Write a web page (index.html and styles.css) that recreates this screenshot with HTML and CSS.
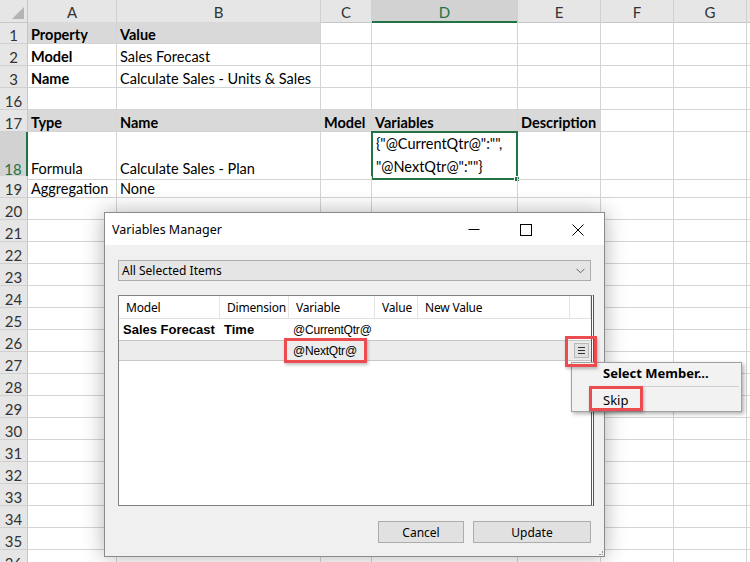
FILE: index.html
```html
<!DOCTYPE html>
<html>
<head>
<meta charset="utf-8">
<link rel="stylesheet" href="styles.css">
</head>
<body>
<div class="screen">
  <div class="sheet">
    <div class="row hdr-row">
      <div class="corner"><span class="tri"></span></div>
      <div class="colh">A</div><div class="colh">B</div><div class="colh">C</div>
      <div class="colh sel">D</div><div class="colh">E</div><div class="colh">F</div><div class="colh">G</div><div class="colh"></div>
    </div>
    <div class="row">
      <div class="rowh">1</div>
      <div class="cell fill b">Property</div><div class="cell fill b">Value</div><div class="cell"></div>
      <div class="cell"></div><div class="cell"></div><div class="cell"></div><div class="cell"></div><div class="cell"></div>
    </div>
    <div class="row">
      <div class="rowh">2</div>
      <div class="cell b">Model</div><div class="cell">Sales Forecast</div><div class="cell"></div>
      <div class="cell"></div><div class="cell"></div><div class="cell"></div><div class="cell"></div><div class="cell"></div>
    </div>
    <div class="row">
      <div class="rowh">3</div>
      <div class="cell b">Name</div><div class="cell">Calculate Sales - Units &amp; Sales</div><div class="cell"></div>
      <div class="cell"></div><div class="cell"></div><div class="cell"></div><div class="cell"></div><div class="cell"></div>
    </div>
    <div class="row">
      <div class="rowh">16</div>
      <div class="cell"></div><div class="cell"></div><div class="cell"></div>
      <div class="cell"></div><div class="cell"></div><div class="cell"></div><div class="cell"></div><div class="cell"></div>
    </div>
    <div class="row">
      <div class="rowh">17</div>
      <div class="cell fill b">Type</div><div class="cell fill b">Name</div><div class="cell fill b">Model</div>
      <div class="cell fill b">Variables</div><div class="cell fill b">Description</div><div class="cell"></div><div class="cell"></div><div class="cell"></div>
    </div>
    <div class="row tall">
      <div class="rowh sel">18</div>
      <div class="cell">Formula</div><div class="cell">Calculate Sales - Plan</div><div class="cell"></div>
      <div class="cell active"><div class="wrap">{"@CurrentQtr@":"",<br>"@NextQtr@":""}</div><span class="handle"></span></div>
      <div class="cell"></div><div class="cell"></div><div class="cell"></div><div class="cell"></div>
    </div>
    <div class="row">
      <div class="rowh">19</div>
      <div class="cell">Aggregation</div><div class="cell">None</div><div class="cell"></div>
      <div class="cell"></div><div class="cell"></div><div class="cell"></div><div class="cell"></div><div class="cell"></div>
    </div>
    <div class="row"><div class="rowh">20</div><div class="cell"></div><div class="cell"></div><div class="cell"></div><div class="cell"></div><div class="cell"></div><div class="cell"></div><div class="cell"></div><div class="cell"></div></div>
    <div class="row"><div class="rowh">21</div><div class="cell"></div><div class="cell"></div><div class="cell"></div><div class="cell"></div><div class="cell"></div><div class="cell"></div><div class="cell"></div><div class="cell"></div></div>
    <div class="row"><div class="rowh">22</div><div class="cell"></div><div class="cell"></div><div class="cell"></div><div class="cell"></div><div class="cell"></div><div class="cell"></div><div class="cell"></div><div class="cell"></div></div>
    <div class="row"><div class="rowh">23</div><div class="cell"></div><div class="cell"></div><div class="cell"></div><div class="cell"></div><div class="cell"></div><div class="cell"></div><div class="cell"></div><div class="cell"></div></div>
    <div class="row"><div class="rowh">24</div><div class="cell"></div><div class="cell"></div><div class="cell"></div><div class="cell"></div><div class="cell"></div><div class="cell"></div><div class="cell"></div><div class="cell"></div></div>
    <div class="row"><div class="rowh">25</div><div class="cell"></div><div class="cell"></div><div class="cell"></div><div class="cell"></div><div class="cell"></div><div class="cell"></div><div class="cell"></div><div class="cell"></div></div>
    <div class="row"><div class="rowh">26</div><div class="cell"></div><div class="cell"></div><div class="cell"></div><div class="cell"></div><div class="cell"></div><div class="cell"></div><div class="cell"></div><div class="cell"></div></div>
    <div class="row"><div class="rowh">27</div><div class="cell"></div><div class="cell"></div><div class="cell"></div><div class="cell"></div><div class="cell"></div><div class="cell"></div><div class="cell"></div><div class="cell"></div></div>
    <div class="row"><div class="rowh">28</div><div class="cell"></div><div class="cell"></div><div class="cell"></div><div class="cell"></div><div class="cell"></div><div class="cell"></div><div class="cell"></div><div class="cell"></div></div>
    <div class="row"><div class="rowh">29</div><div class="cell"></div><div class="cell"></div><div class="cell"></div><div class="cell"></div><div class="cell"></div><div class="cell"></div><div class="cell"></div><div class="cell"></div></div>
    <div class="row"><div class="rowh">30</div><div class="cell"></div><div class="cell"></div><div class="cell"></div><div class="cell"></div><div class="cell"></div><div class="cell"></div><div class="cell"></div><div class="cell"></div></div>
    <div class="row"><div class="rowh">31</div><div class="cell"></div><div class="cell"></div><div class="cell"></div><div class="cell"></div><div class="cell"></div><div class="cell"></div><div class="cell"></div><div class="cell"></div></div>
    <div class="row"><div class="rowh">32</div><div class="cell"></div><div class="cell"></div><div class="cell"></div><div class="cell"></div><div class="cell"></div><div class="cell"></div><div class="cell"></div><div class="cell"></div></div>
    <div class="row"><div class="rowh">33</div><div class="cell"></div><div class="cell"></div><div class="cell"></div><div class="cell"></div><div class="cell"></div><div class="cell"></div><div class="cell"></div><div class="cell"></div></div>
    <div class="row"><div class="rowh">34</div><div class="cell"></div><div class="cell"></div><div class="cell"></div><div class="cell"></div><div class="cell"></div><div class="cell"></div><div class="cell"></div><div class="cell"></div></div>
    <div class="row"><div class="rowh">35</div><div class="cell"></div><div class="cell"></div><div class="cell"></div><div class="cell"></div><div class="cell"></div><div class="cell"></div><div class="cell"></div><div class="cell"></div></div>
    <div class="row"><div class="rowh">36</div><div class="cell"></div><div class="cell"></div><div class="cell"></div><div class="cell"></div><div class="cell"></div><div class="cell"></div><div class="cell"></div><div class="cell"></div></div>
  </div>

  <div class="dialog">
    <div class="titlebar">
      <span class="title">Variables Manager</span>
      <div class="winbtns">
        <svg class="wb" width="12" height="12" viewBox="0 0 12 12"><path d="M0.5 5.5H11.5" stroke="#000" stroke-width="1"/></svg>
        <svg class="wb" width="12" height="12" viewBox="0 0 12 12"><rect x="0.5" y="0.5" width="11" height="11" fill="none" stroke="#000" stroke-width="1"/></svg>
        <svg class="wb" width="12" height="12" viewBox="0 0 12 12"><path d="M0.5 0.5L11.5 11.5M11.5 0.5L0.5 11.5" stroke="#000" stroke-width="1"/></svg>
      </div>
    </div>
    <div class="dbody">
      <div class="combo">
        <span>All Selected Items</span>
        <svg width="9" height="6" viewBox="0 0 9 6"><path d="M0.5 0.8L4.5 4.8L8.5 0.8" fill="none" stroke="#606060" stroke-width="1"/></svg>
      </div>
      <div class="list">
        <div class="lrow lhead">
          <div class="lc">Model</div><div class="lc">Dimension</div><div class="lc">Variable</div><div class="lc">Value</div><div class="lc">New Value</div><div class="lc"></div>
        </div>
        <div class="lrow">
          <div class="lc b">Sales Forecast</div><div class="lc b">Time</div><div class="lc">@CurrentQtr@</div><div class="lc"></div><div class="lc"></div><div class="lc"></div>
        </div>
        <div class="lrow lsel">
          <div class="lc"></div><div class="lc"></div><div class="lc">@NextQtr@</div><div class="lc"></div><div class="lc"></div>
          <div class="lc menucell"><span class="menubtn"><i></i><i></i><i></i></span></div>
        </div>
      </div>
      <div class="footer">
        <div class="btn cancel">Cancel</div>
        <div class="btn update">Update</div>
      </div>
    </div>
    <span class="grip"></span>
  </div>

  <div class="ctxmenu">
    <div class="mi strong">Select Member...</div>
    <div class="msep"></div>
    <div class="mi">Skip</div>
  </div>

  <span class="hl hl-var"></span>
  <span class="hl hl-btn"></span>
  <span class="hl hl-skip"></span>
</div>
</body>
</html>
```

FILE: styles.css
```css
* { box-sizing: border-box; }
html, body { margin: 0; padding: 0; background: #fff; }
.screen {
  position: relative;
  width: 750px;
  height: 562px;
  overflow: hidden;
  font-family: "Lato", "Liberation Sans", sans-serif;
}

/* ---------- spreadsheet ---------- */
.sheet { display: flex; flex-direction: column; }
.row {
  display: grid;
  grid-template-columns: 28px 89px 204px 51px 146px 83px 73px 73px 40px;
  height: 22px;
  font-size: 14.5px;
  color: #000;
}
.row.tall { height: 44px; }
.hdr-row { background: #e6e6e6; }
.corner {
  position: relative;
  background: #e6e6e6;
  border-right: 1px solid #c6c6c6;
  border-bottom: 1px solid #c6c6c6;
}
.tri {
  position: absolute;
  right: 3px; bottom: 3px;
  width: 0; height: 0;
  border-left: 12px solid transparent;
  border-bottom: 12px solid #b4b4b4;
}
.colh {
  display: flex; align-items: center; justify-content: center;
  padding-top: 2px;
  border-right: 1px solid #d0d0d0;
  border-bottom: 1px solid #c6c6c6;
  color: #333;
  font-size: 15px;
}
.colh.sel {
  background: #d2d2d2;
  color: #217346;
  border-bottom: 2px solid #217346;
  padding-top: 3px;
}
.rowh {
  display: flex; align-items: flex-end; justify-content: center;
  background: #e6e6e6;
  border-right: 1px solid #c6c6c6;
  border-bottom: 1px solid #d0d0d0;
  color: #333;
  font-size: 15px;
  line-height: 16px;
}
.rowh.sel {
  background: #d2d2d2;
  color: #217346;
  border-right: 2px solid #217346;
}
.row.tall .rowh, .row.tall .cell { padding-bottom: 2px; }
.cell {
  position: relative;
  display: flex; align-items: flex-end;
  padding: 0 0 0 3px;
  line-height: 16px;
  white-space: nowrap;
  border-right: 1px solid #d4d4d4;
  border-bottom: 1px solid #d4d4d4;
}
.cell.fill { background: #d9d9d9; }
.cell.b { font-weight: bold; }
.row.tall .cell.active {
  margin: -1px 0 0 -1px;
  border: 2px solid #217346;
  padding: 0 0 0 3px;
  align-items: flex-start;
}
.wrap { line-height: 22.6px; margin-top: 0; }
.handle {
  position: absolute;
  right: -4px; bottom: -4px;
  width: 6px; height: 6px;
  background: #217346;
  border: 1px solid #fff;
}

/* ---------- dialog ---------- */
.dialog {
  position: absolute;
  left: 104px; top: 212px;
  width: 501px; height: 345px;
  border: 1px solid #8a8a8a;
  background: #f0f0f0;
  box-shadow: 0 0 20px rgba(0,0,0,0.3);
  display: flex; flex-direction: column;
  font-family: "Noto Sans", "Liberation Sans", sans-serif;
  font-size: 12px;
  color: #000;
}
.titlebar {
  height: 32px;
  background: #fff;
  display: flex; align-items: center; justify-content: space-between;
  padding-left: 7px;
}
.title { font-size: 12.5px; }
.winbtns { display: flex; align-items: center; gap: 40px; padding-right: 20px; margin-top: 1px; }
.winbtns .wb { display: block; }
.dbody {
  flex: 1;
  display: flex; flex-direction: column;
  padding: 15px 13px 0 13px;
}
.combo {
  height: 21px;
  background: #e5e5e5;
  border: 1px solid #adadad;
  display: flex; align-items: center; justify-content: space-between;
  padding: 0 5px 0 3px;
}
.combo svg { display: block; }
.list {
  margin-top: 14px;
  margin-right: -3px;
  height: 211px;
  background: #fff;
  border: 1px solid #828282;
  border-right: 3px double #555;
  font-family: "Liberation Sans", sans-serif;
}
.lrow {
  display: grid;
  grid-template-columns: 101px 69px 86px 43px 152px 1fr;
  height: 21px;
  align-items: stretch;
}
.lhead {
  height: 23px;
  border-bottom: 1px solid #e0e0e0;
  font-family: "Noto Sans", sans-serif;
}
.lhead .lc { border-right: 1px solid #e5e5e5; padding-left: 7px; }
.lc {
  display: flex; align-items: center;
  padding-left: 4px;
  white-space: nowrap;
  letter-spacing: -0.2px;
}
.lc.b { font-weight: bold; font-size: 13px; letter-spacing: 0; }
.lsel {
  background: #ececec;
  border-top: 1px solid #c8c8c8;
  border-bottom: 1px solid #c8c8c8;
}
.menucell { justify-content: flex-end; padding-right: 2px; }
.menubtn {
  width: 15px; height: 15px;
  background: #e1e1e1;
  border: 1px solid #b8b8b8;
  display: flex; flex-direction: column; justify-content: center; align-items: center; gap: 2px;
}
.menubtn i { display: block; width: 7px; height: 1px; background: #333; }
.footer {
  margin-top: 15px;
  display: flex; justify-content: flex-end; gap: 9px;
}
.btn {
  height: 22px;
  background: #e1e1e1;
  border: 1px solid #adadad;
  display: flex; align-items: center; justify-content: center;
}
.btn.cancel { width: 86px; }
.btn.update { width: 118px; }
.grip {
  position: absolute; right: 1px; bottom: 1px;
  width: 4px; height: 4px;
  border-right: 1px dotted #999; border-bottom: 1px dotted #999;
}

/* ---------- context menu ---------- */
.ctxmenu {
  position: absolute;
  left: 571px; top: 362px;
  width: 171px; height: 50px;
  background: #f2f2f2;
  border: 1px solid #a0a0a0;
  box-shadow: 2px 2px 4px rgba(0,0,0,0.3);
  font-family: "Noto Sans", "Liberation Sans", sans-serif;
  font-size: 13px;
  padding-top: 0;
}
.mi { padding-left: 31px; height: 21px; line-height: 20px; }
.mi.strong { font-weight: bold; }
.msep { height: 1px; background: #cfcfcf; margin: 2px 2px 3px 30px; }

/* ---------- red highlight boxes ---------- */
.hl {
  position: absolute;
  border: 3px solid #ec4b4f;
  box-shadow: 1px 2px 3px rgba(0,0,0,0.25);
}
.hl-var { left: 284px; top: 338px; width: 83px; height: 25px; }
.hl-btn { left: 565px; top: 336px; width: 32px; height: 31px; }
.hl-skip { left: 589px; top: 386px; width: 54px; height: 25px; }
```
